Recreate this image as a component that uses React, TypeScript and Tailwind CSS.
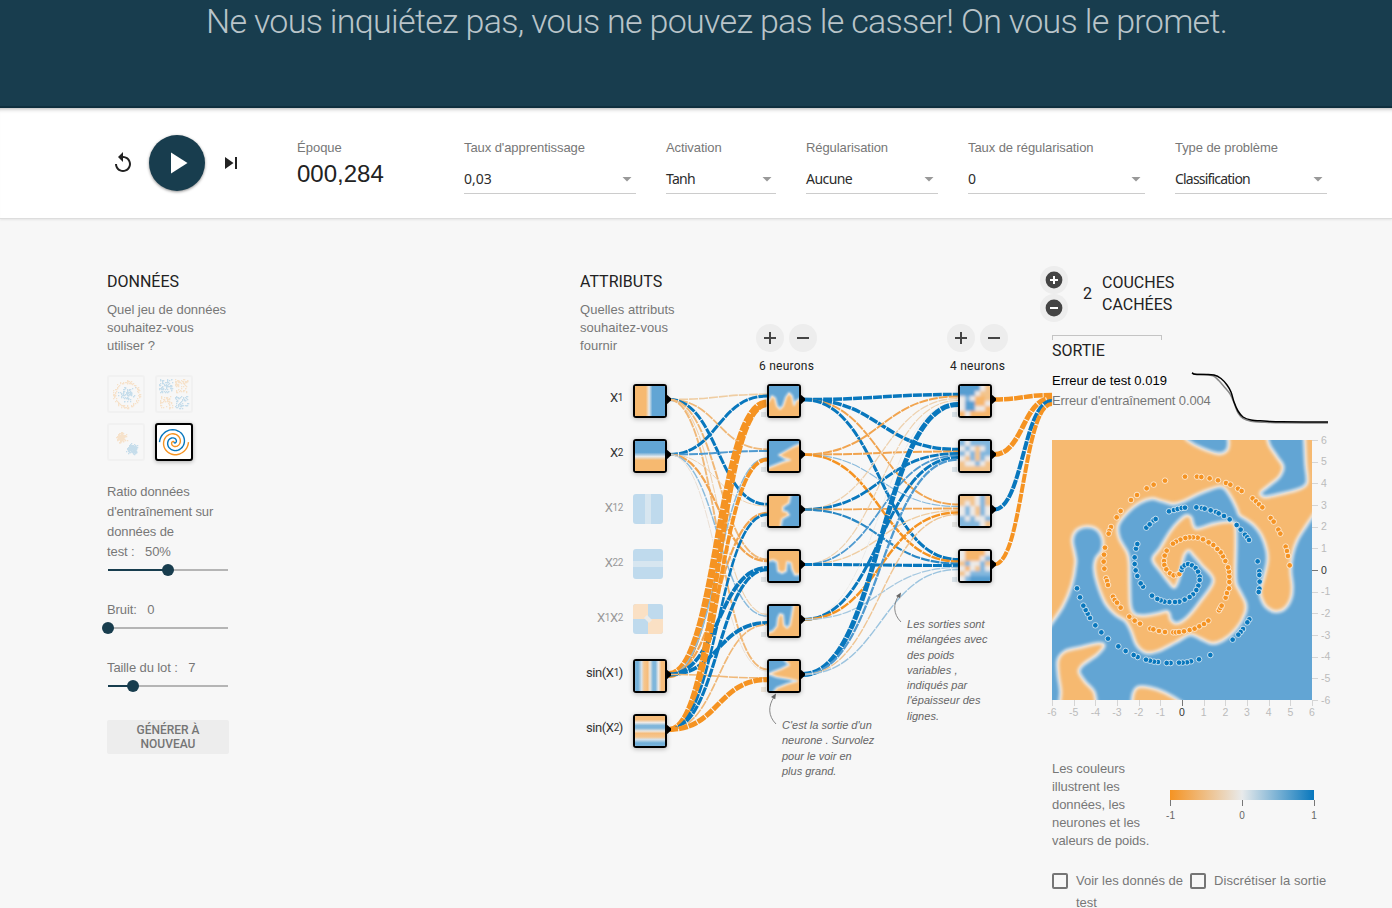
import React from "react";

type Pt = [number, number];

const BLUE = "#0877bd";
const ORANGE = "#f59322";
const MAP_ORANGE = "#f6b970";
const MAP_BLUE = "#62a5d4";

/** Catmull-Rom smoothing of a list of points into a cubic path. */
function smooth(p: Pt[]): string {
  const n = p.length;
  const at = (i: number): Pt => p[Math.max(0, Math.min(n - 1, i))];
  let d = `M${p[0][0]},${p[0][1]}`;
  for (let i = 0; i < n - 1; i++) {
    const a = at(i - 1), b = at(i), c = at(i + 1), e = at(i + 2);
    d += `C${b[0] + (c[0] - a[0]) / 6},${b[1] + (c[1] - a[1]) / 6} ${c[0] - (e[0] - b[0]) / 6},${c[1] - (e[1] - b[1]) / 6} ${c[0]},${c[1]}`;
  }
  return d;
}

/* ---------- toolbar ---------- */

function Select({ label, value, box, text }: { label: string; value: string; box: string; text: string }) {
  return (
    <div className={box}>
      <div className="h-[18px] whitespace-nowrap text-[13px] leading-[18px] tracking-[-0.08px] text-[#777]">{label}</div>
      <div className="mt-[8px] flex h-[29px] items-center justify-between border-b border-[#ccc] pr-1">
        <span className={"font-['Noto_Sans',sans-serif] text-[14px] leading-5 text-[#2c2c2c] " + text}>{value}</span>
        <svg width="10" height="5" viewBox="0 0 10 5"><path d="M0.5 0h9L5 4.5z" fill="#999" /></svg>
      </div>
    </div>
  );
}

function Toolbar() {
  return (
    <div className="relative flex h-[111px] border-b border-[#ddd] bg-white pl-[111px] shadow-[inset_0_5px_5px_-5px_rgba(0,0,0,0.45),0_1px_2px_rgba(0,0,0,0.08)]">
      <div className="flex h-[110px] w-[186px] items-center">
        <svg width="24" height="24" viewBox="0 0 24 24" fill="#222"><path d="M12 5V1L7 6l5 5V7c3.31 0 6 2.69 6 6s-2.69 6-6 6-6-2.69-6-6H4c0 4.42 3.58 8 8 8s8-3.58 8-8-3.58-8-8-8z" /></svg>
        <div className="ml-[14px] flex size-14 items-center justify-center rounded-full bg-[#183d4e] shadow-[0_1px_3px_rgba(0,0,0,0.45)]">
          <svg width="36" height="36" viewBox="0 0 24 24" fill="#fff"><path d="M8 5v14l11-7z" /></svg>
        </div>
        <svg className="ml-[14px]" width="24" height="24" viewBox="0 0 24 24" fill="#222"><path d="M6 18l8.5-6L6 6v12zM16 6v12h2V6h-2z" /></svg>
      </div>
      <div className="flex gap-[30px] pt-[31px]">
        <div className="w-[137px]">
          <div className="h-[18px] text-[13px] leading-[18px] text-[#777]">Époque</div>
          <div className="mt-[3px] text-[24px] leading-[28px] text-[#222]">000,284</div>
        </div>
        <Select label="Taux d'apprentissage" value="0,03" box="w-[172px]" text="" />
        <Select label="Activation" value="Tanh" box="w-[110px]" text="tracking-[-0.7px]" />
        <Select label="Régularisation" value="Aucune" box="w-[132px]" text="tracking-[-0.55px]" />
        <Select label="Taux de régularisation" value="0" box="w-[177px]" text="" />
        <Select label="Type de problème" value="Classification" box="w-[152px]" text="tracking-[-0.8px]" />
      </div>
    </div>
  );
}

/* ---------- data column ---------- */

function rng(seed: number) {
  let s = seed;
  return () => {
    s = (s * 16807) % 2147483647;
    return s / 2147483647;
  };
}

function datasetDots(kind: "circle" | "xor" | "gauss") {
  const r = rng(kind === "circle" ? 77 : kind === "xor" ? 901 : 3331);
  const out: { x: number; y: number; c: string }[] = [];
  const g = () => (r() + r() + r() - 1.5) * 1.4;
  if (kind === "circle") {
    for (let i = 0; i < 75; i++) out.push({ x: 17 + g() * 5, y: 17 + g() * 5, c: BLUE });
    for (let i = 0; i < 110; i++) {
      const a = r() * 6.283, d = 11 + r() * 3;
      out.push({ x: 17.5 + d * Math.cos(a), y: 17 + d * Math.sin(a), c: ORANGE });
    }
  } else if (kind === "xor") {
    for (let i = 0; i < 250; i++) {
      const u = r() < 0.5, v = r() < 0.5;
      out.push({ x: (u ? 18 : 2) + r() * 13, y: (v ? 18 : 2) + r() * 13, c: u === v ? BLUE : ORANGE });
    }
  } else {
    for (let i = 0; i < 150; i++) out.push({ x: 12 + g() * 3.2, y: 12 + g() * 3, c: ORANGE });
    for (let i = 0; i < 150; i++) out.push({ x: 23 + g() * 3.4, y: 23.5 + g() * 3, c: BLUE });
  }
  return out;
}

function DatasetThumb({ kind }: { kind: "circle" | "xor" | "gauss" }) {
  return (
    <div className="size-[38px] rounded-[3px] border-2 border-[#f1f1f1]">
      <svg className="opacity-20" width="34" height="34">
        {datasetDots(kind).map((d, i) => (
          <rect key={i} x={Math.round(d.x)} y={Math.round(d.y)} width="1.3" height="1.3" fill={d.c} />
        ))}
      </svg>
    </div>
  );
}

function spiral(flip: boolean) {
  const pts: Pt[] = [];
  for (let i = 0; i <= 60; i++) {
    const t = (i / 60) * 3.5 * Math.PI;
    const rad = (i / 60) * 14.5;
    const s = flip ? -1 : 1;
    pts.push([17 + s * rad * Math.sin(t), 17.2 + s * rad * Math.cos(t)]);
  }
  return smooth(pts);
}

function Slider({ label, value, fill }: { label: string; value: string; fill: number }) {
  return (
    <div>
      <div className="whitespace-pre text-[13px] leading-5 tracking-[-0.1px] text-[#777]">{label + "   " + value}</div>
      <svg className="-ml-[6px] mt-[2px] block overflow-visible" width="134" height="12">
        <rect x="7" y="5" width="120" height="2" fill="#b5b5b5" />
        <rect x="7" y="5" width={fill} height="2" fill="#183d4e" />
        <circle cx={7 + fill} cy="6" r="6" fill="#183d4e" />
      </svg>
    </div>
  );
}

function DataColumn() {
  return (
    <div className="w-[122px] shrink-0 pt-[53px]">
      <h4 className="font-[Roboto,sans-serif] text-[16px] leading-5 text-[#222]">DONNÉES</h4>
      <p className="mt-[9px] whitespace-pre text-[13px] leading-[18px] tracking-[-0.05px] text-[#777]">{"Quel jeu de données\nsouhaitez-vous\nutiliser ?"}</p>
      <div className="mt-5 grid w-[86px] grid-cols-2 gap-[10px]">
        <DatasetThumb kind="circle" />
        <DatasetThumb kind="xor" />
        <DatasetThumb kind="gauss" />
        <div className="size-[38px] rounded-[3px] border-2 border-black bg-white shadow-[0_1px_4px_rgba(0,0,0,0.3)]">
          <svg width="34" height="34" fill="none" strokeWidth="1.4">
            <path d={spiral(true)} stroke={ORANGE} />
            <path d={spiral(false)} stroke={BLUE} />
          </svg>
        </div>
      </div>
      <div className="mt-[21px]">
        <Slider label={"Ratio données\nd'entraînement sur\ndonnées de\ntest :"} value="50%" fill={60} />
      </div>
      <div className="mt-[24px]"><Slider label="Bruit:" value="0" fill={0} /></div>
      <div className="mt-[24px]"><Slider label="Taille du lot :" value="7" fill={25} /></div>
      <div className="mt-[28px] flex h-[34px] items-center justify-center rounded-[2px] bg-[#ededed] text-center font-[Roboto,sans-serif] text-[12px] font-medium leading-[14px] text-[#757575]">
        GÉNÉRER À<br />NOUVEAU
      </div>
    </div>
  );
}

/* ---------- network ---------- */

const OX = 580;
const OY = 219;

type Link = [number, number, number, string];

const LO = "#f0b878";
const VLO = "#eed2b0";
const MO = "#f1a44f";
const LB = "#8bbbdc";
const MB = "#4f9ad0";
const VG = "#e4e2df";

const layer1: Link[] = [
  [0, 0, 1.6, "#efcda2"], [0, 1, 1.8, LO], [0, 2, 3, BLUE], [0, 3, 1.9, LO], [0, 4, 1.1, VLO], [0, 5, 1.9, LO],
  [1, 0, 3, BLUE], [1, 1, 2, MB], [1, 2, 1, VLO], [1, 3, 2.2, MO], [1, 4, 1.5, LB], [1, 5, 0.9, "#e9ddd0"],
  [5, 0, 7, ORANGE], [5, 1, 1.5, LB], [5, 2, 2.2, MO], [5, 3, 3.8, BLUE], [5, 4, 3.8, BLUE], [5, 5, 1.6, LO],
  [6, 0, 5, ORANGE], [6, 1, 3.8, ORANGE], [6, 2, 2.6, BLUE], [6, 3, 3.2, BLUE], [6, 4, 1.7, LO], [6, 5, 5, ORANGE],
];
const layer2: Link[] = [
  [0, 0, 3.5, BLUE], [0, 1, 3.5, BLUE], [0, 2, 1.9, MO], [0, 3, 3, BLUE],
  [1, 0, 2, MO], [1, 1, 2, MO], [1, 2, 1.2, LB], [1, 3, 2.5, ORANGE],
  [2, 0, 1.3, VLO], [2, 1, 2.8, BLUE], [2, 2, 1.8, MO], [2, 3, 2.2, "#2887c4"],
  [3, 0, 1.2, VLO], [3, 1, 1.8, MB], [3, 2, 1.4, "#efcda2"], [3, 3, 3.1, BLUE],
  [4, 0, 0.6, VG], [4, 1, 3, BLUE], [4, 2, 2.5, ORANGE], [4, 3, 1.3, "#a5c8e0"],
  [5, 0, 5, BLUE], [5, 1, 2.3, MB], [5, 2, 1.4, "#efc594"], [5, 3, 1.4, "#9cc4df"],
];
const layer3: Link[] = [[0, 0, 4.5, ORANGE], [1, 0, 5, ORANGE], [2, 0, 4, BLUE], [3, 0, 4, ORANGE]];

function diag(x0: number, y0: number, x1: number, y1: number) {
  const m = (x0 + x1) / 2;
  return `M${x0},${y0}C${m},${y0} ${m},${y1} ${x1},${y1}`;
}

function Links() {
  const draw = (ls: Link[], x0: number, x1: number, n: number, key: string) =>
    ls.map(([i, j, w, c]) => (
      <path
        key={key + i + "-" + j}
        d={diag(x0, 399.5 + i * 55, x1, 399.5 + j * 55 + ((i - (n - 1) / 2) / n) * 12)}
        stroke={c}
        strokeWidth={w}
        strokeDasharray="9 1"
      />
    ));
  return (
    <svg className="absolute left-0 top-0" width="472" height="600" viewBox={`${OX} ${OY} 472 600`} fill="none">
      {draw(layer1, 669, 767, 7, "a")}
      {draw(layer2, 803, 958, 6, "b")}
      {draw(layer3, 994, 1052, 4, "c")}
      <g stroke="#888" strokeWidth="1">
        <path d="M776 724C768 716 768 706 774 697" />
        <path d="M901 622C893 614 893 604 899 595" />
      </g>
      <g fill="#666">
        <path d="M776 693.5l-5 3.5 4.2 2.2z" />
        <path d="M901 592.5l-5 3.5 4.2 2.2z" />
      </g>
    </svg>
  );
}

type Shape = { base: string; top: string; d: string };

const hidden1: Shape[] = [
  { base: MAP_ORANGE, top: MAP_BLUE, d: "M-4,-4V16L0,15L3,10L6,12L8,20L11,23L14,20L17,11L20,7L23,10L25,19L27,15L34,11V-4Z" },
  { base: MAP_ORANGE, top: MAP_BLUE, d: "M-4,-4V28L4,25L14,21L21,19L15,17L10,14L17,10L24,6L34,2V-4Z" },
  { base: MAP_BLUE, top: MAP_ORANGE, d: "M-4,-4H22L20,7L14,11L14,15L18,16L20,19L13,23L11,34H-4Z" },
  { base: MAP_BLUE, top: MAP_ORANGE, d: "M-4,-4H34V23L26,24L23,18L22,12L18,11L17,20L13,22L9,20L8,11L4,9L-4,11Z" },
  { base: MAP_ORANGE, top: MAP_BLUE, d: "M-4,-4H25L23,8L21,19L18,22L15,19L14,9L11,8L9,12L8,20L4,25L-4,28Z" },
  { base: MAP_ORANGE, top: MAP_BLUE, d: "M-4,-4H13L20,4L12,8L4,11L0,13L8,16L20,18L28,20L18,23L8,27L2,34H-4Z" },
];

const hidden2: string[][] = [
  ["BBBBwo", "BBBwoo", "wbwOOo", "wBBOOw", "wBBwwO", "OwOOOO"],
  ["bwbbbb", "wbwowb", "bwbobb", "wobobw", "owwbwo", "oooooo"],
  ["ooowbo", "owowbo", "wbwobw", "wbwobw", "bwbwwb", "bbbbwo"],
  ["wOOOOw", "wOOOwb", "obwwbo", "wOwobw", "owbbbb", "wbBBBB"],
];
const cell: Record<string, string> = { B: "#569ed1", b: "#82b7de", w: "#eceae8", o: "#f3c48c", O: "#f6b66c" };

function NodeBox({ x, y, bias, children }: { x: number; y: number; bias?: string; children: React.ReactNode }) {
  return (
    <div className="absolute size-[34px]" style={{ left: x - OX, top: y - OY }}>
      {bias && <div className="absolute -left-[6px] top-[28px] size-[5px]" style={{ background: bias }} />}
      <div className="relative size-[34px] overflow-hidden rounded-[3px] border-2 border-black shadow-[0_1px_5px_rgba(0,0,0,0.28)]">
        <svg className="block" width="30" height="30">{children}</svg>
      </div>
      <svg className="absolute left-[33px] top-[10px]" width="6" height="11"><path d="M0 0L5 4.2V6.4L0 11z" /></svg>
    </div>
  );
}

function Stops({ c }: { c: [number, string][] }) {
  return <>{c.map(([o, s], i) => <stop key={i} offset={o} stopColor={s} />)}</>;
}

const sinStops: [number, string][] = [
  [0, "#7ab3da"], [0.1, "#6faed8"], [0.22, "#d7e2ea"], [0.3, "#f6c68e"], [0.42, "#f6bd7c"], [0.5, "#ece6de"],
  [0.6, "#7fb6db"], [0.68, "#7fb6db"], [0.78, "#eceae8"], [0.88, "#f6bd7c"], [1, "#f6bd7c"],
];

function Label({ y, faded, children }: { y: number; faded?: boolean; children: React.ReactNode }) {
  return (
    <div
      className={"absolute left-0 flex h-5 w-[43px] items-center justify-end whitespace-nowrap font-[Roboto,sans-serif] text-[13px] tracking-[-0.4px] " + (faded ? "text-[#999]" : "text-[#333]")}
      style={{ top: y - 9 - OY }}
    >
      {children}
    </div>
  );
}

const S = ({ children }: { children: React.ReactNode }) => <span className="pb-px text-[10px]">{children}</span>;

function RoundButton({ minus }: { minus?: boolean }) {
  return (
    <div className="flex size-7 items-center justify-center rounded-full bg-[#ededed]">
      <svg width="12" height="12" fill="#444">
        <rect x="0" y="5" width="12" height="2" />
        {!minus && <rect x="5" y="0" width="2" height="12" />}
      </svg>
    </div>
  );
}

function LayerHead({ x, label }: { x: number; label: string }) {
  return (
    <div className="absolute top-[105px] w-[61px]" style={{ left: x - OX }}>
      <div className="flex gap-[5px]"><RoundButton /><RoundButton minus /></div>
      <div className="mt-[6px] whitespace-nowrap pl-[3px] font-[Roboto,sans-serif] text-[12px] leading-4 tracking-[0.25px] text-[#222]">{label}</div>
    </div>
  );
}

function Network() {
  return (
    <div className="relative ml-[351px] h-[689px] w-[472px] shrink-0 pt-[53px]">
      <svg width="0" height="0" className="absolute">
        <defs>
          <linearGradient id="gx"><Stops c={[[0, MAP_ORANGE], [0.36, MAP_ORANGE], [0.47, "#e8eaeb"], [0.58, MAP_BLUE], [1, MAP_BLUE]]} /></linearGradient>
          <linearGradient id="gy" x2="0" y2="1"><Stops c={[[0, MAP_BLUE], [0.38, MAP_BLUE], [0.52, "#e8eaeb"], [0.64, MAP_ORANGE], [1, MAP_ORANGE]]} /></linearGradient>
          <linearGradient id="sx"><Stops c={sinStops} /></linearGradient>
          <linearGradient id="sy" x1="0" y1="1" x2="0" y2="0"><Stops c={sinStops} /></linearGradient>
          <filter id="b1"><feGaussianBlur stdDeviation="0.8" /></filter>
          <filter id="b2" filterUnits="userSpaceOnUse" x="-6" y="-6" width="42" height="42"><feGaussianBlur stdDeviation="1.6" /></filter>
        </defs>
      </svg>
      <h4 className="font-[Roboto,sans-serif] text-[16px] leading-5 text-[#222]">ATTRIBUTS</h4>
      <p className="mt-[9px] whitespace-pre text-[13px] leading-[18px] tracking-[0.04px] text-[#777]">{"Quelles attributs\nsouhaitez-vous\nfournir"}</p>

      <Links />
      <LayerHead x={756} label="6 neurons" />
      <LayerHead x={947} label="4 neurons" />

      <Label y={397}>X<S>1</S></Label>
      <Label y={452}>X<S>2</S></Label>
      <Label y={507} faded>X<S>12</S></Label>
      <Label y={562} faded>X<S>22</S></Label>
      <Label y={617} faded>X<S>1</S>X<S>2</S></Label>
      <Label y={672}>sin(X<S>1</S>)</Label>
      <Label y={727}>sin(X<S>2</S>)</Label>

      <NodeBox x={633} y={384}><rect width="30" height="30" fill="url(#gx)" /></NodeBox>
      <NodeBox x={633} y={439}><rect width="30" height="30" fill="url(#gy)" /></NodeBox>
      <svg className="absolute left-[53px] top-[275px] rounded-[3px]" width="30" height="30">
        <rect width="30" height="30" fill="#bfdaed" /><rect x="12" width="6" height="30" fill="#d7e6f0" />
      </svg>
      <svg className="absolute left-[53px] top-[330px] rounded-[3px]" width="30" height="30">
        <rect width="30" height="30" fill="#bfdaed" /><rect y="12" width="30" height="6" fill="#d7e6f0" />
      </svg>
      <svg className="absolute left-[53px] top-[385px] rounded-[3px]" width="30" height="30">
        <rect width="30" height="30" fill="#bfdaed" />
        <path d="M0 0h15v15H0zM15 15h15v15H15z" fill="#fae0c4" />
        <path d="M11 14l3-3 5 5-3 3z" fill="#ecebe9" />
      </svg>
      <NodeBox x={633} y={659}><rect width="30" height="30" fill="url(#sx)" /></NodeBox>
      <NodeBox x={633} y={714}><rect width="30" height="30" fill="url(#sy)" /></NodeBox>

      {hidden1.map((s, i) => (
        <NodeBox key={i} x={767} y={384 + i * 55} bias={i === 5 ? "#ebe3d8" : "#dfe3e5"}>
          <rect width="30" height="30" fill={s.base} />
          <path d={s.d} fill={s.top} />
          <path d={s.d} fill="none" stroke="#edebe9" strokeWidth="2" strokeLinejoin="round" filter="url(#b1)" />
        </NodeBox>
      ))}
      {hidden2.map((rows, i) => (
        <NodeBox key={i} x={958} y={384 + i * 55} bias={i === 2 ? "#e3e3e1" : "#d8e1e7"}>
          <rect width="30" height="30" fill="#eceae8" />
          <g filter="url(#b2)">
            {rows.map((r, y) => r.split("").map((c, x) => (
              <rect key={x + "," + y} x={x === 0 ? -4 : x * 5} y={y === 0 ? -4 : y * 5} width={x === 0 || x === 5 ? 9 : 5} height={y === 0 || y === 5 ? 9 : 5} fill={cell[c]} />
            )))}
          </g>
        </NodeBox>
      ))}

      <p className="absolute left-[327px] top-[398px] whitespace-pre text-[11px] italic leading-[15.25px] tracking-[0.03px] text-[#666]">{"Les sorties sont\nmélangées avec\ndes poids\nvariables ,\nindiqués par\nl'épaisseur des\nlignes."}</p>
      <p className="absolute left-[202px] top-[499px] whitespace-pre text-[11px] italic leading-[15.25px] text-[#666]">{"C'est la sortie d'un\nneurone . Survolez\npour le voir en\nplus grand."}</p>
    </div>
  );
}

/* ---------- output ---------- */

const mainBlue: Pt[] = [
  [830, 240], [800, 285], [772, 330], [757, 375], [752, 420], [757, 470], [753, 505], [735, 535], [708, 545], [680, 532], [664, 505], [661, 480],
  [672, 440], [682, 395], [680, 360], [664, 315], [642, 286], [618, 268], [598, 255], [590, 235], [575, 205], [556, 177], [540, 170],
  [510, 178], [475, 192], [430, 214], [400, 222], [365, 213], [335, 206], [300, 218], [265, 245], [235, 285], [238, 325], [262, 368], [268, 400],
  [269, 470], [272, 530], [285, 553], [315, 557], [355, 550], [380, 544], [388, 552], [393, 570], [410, 580], [440, 563], [480, 515], [520, 452],
  [485, 405], [462, 378], [446, 362], [432, 378], [425, 410], [415, 450], [403, 472], [385, 455], [362, 425], [338, 388], [360, 355], [390, 305], [415, 275],
  [438, 257], [453, 262], [460, 285], [472, 296], [520, 282], [570, 275], [586, 288], [588, 340], [586, 420], [588, 460], [600, 485], [617, 520], [615, 550],
  [590, 595], [550, 630], [515, 640], [480, 625], [450, 614], [410, 635], [355, 663], [318, 668], [290, 645], [272, 600], [255, 572], [225, 553], [195, 518],
  [172, 460], [163, 415], [168, 385], [186, 360], [187, 325], [170, 298], [140, 290], [110, 301], [97, 330], [104, 370], [107, 400], [95, 465], [68, 530], [20, 600],
];
const topSmall: Pt[] = [[430, 15], [445, 33], [485, 55], [535, 71], [560, 62], [566, 40], [562, 10]];
const topRight: Pt[] = [[680, 10], [688, 45], [712, 82], [729, 110], [718, 140], [685, 168], [662, 188], [675, 201], [725, 191], [775, 178], [801, 158], [797, 100], [793, 10]];
const botLeft: Pt[] = [[57, 830], [62, 785], [55, 735], [54, 690], [75, 664], [120, 652], [175, 640], [192, 648], [170, 675], [130, 703], [117, 725], [135, 755], [162, 785], [170, 830]];
const botMid: Pt[] = [[275, 830], [280, 790], [295, 771], [330, 773], [375, 788], [425, 818], [430, 830]];

const orangeDots: Pt[] = [
  [435,140],[471,140],[484,141],[509,145],[534,151],[558,159],[571,164],[594,176],[605,183],[375,152],[341,164],[320,175],[291,195],[273,210],[242,243],[230,262],[213,291],[208,303],[206,311],[195,353],[192,374],[191,395],[193,416],[198,445],[201,453],[204,465],[219,500],[224,510],[231,518],[242,533],[268,560],[284,572],[300,581],[331,596],[340,598],[357,603],[375,606],[400,607],[408,607],[417,606],[432,604],[449,600],[464,596],[478,589],[492,582],[505,572],[537,541],[541,534],[545,527],[557,503],[561,489],[567,475],[568,456],[568,440],[567,425],[564,412],[556,393],[549,379],[542,367],[532,357],[520,345],[506,337],[489,328],[473,323],[459,322],[448,322],[436,324],[421,329],[408,335],[399,341],[380,362],[374,377],[372,393],[373,405],[379,418],[390,430],[401,436],[413,434],[418,432],[638,205],[648,214],[657,223],[667,232],[692,264],[701,275],[715,299],[721,311],[737,350],[741,363],[744,378],[749,406],
];
const blueDots: Pt[] = [
  [425,420],[427,412],[434,406],[444,402],[456,406],[467,414],[474,425],[479,440],[479,450],[475,467],[469,480],[459,493],[449,501],[434,509],[418,515],[405,516],[388,516],[373,515],[362,511],[352,507],[336,497],[309,470],[302,460],[292,438],[287,421],[284,402],[284,382],[288,356],[292,342],[319,293],[329,283],[341,271],[347,267],[387,244],[402,240],[413,237],[425,234],[435,233],[469,232],[486,234],[494,236],[512,241],[528,246],[536,250],[552,258],[569,268],[590,285],[602,299],[615,314],[622,322],[627,330],[653,394],[658,424],[658,435],[659,455],[658,476],[656,486],[628,568],[622,577],[609,597],[602,606],[595,614],[578,629],[511,675],[477,688],[453,694],[441,697],[428,698],[417,698],[392,699],[380,699],[354,696],[342,695],[330,692],[318,689],[293,681],[281,675],[257,663],[235,649],[204,626],[184,607],[166,586],[150,564],[143,551],[137,540],[130,527],[120,502],[111,475],
];

function Heatmap() {
  const regions: { p: Pt[]; c: string; tail: string }[] = [
    { p: mainBlue, c: MAP_BLUE, tail: "V850H850V240Z" },
    { p: topSmall, c: MAP_BLUE, tail: "Z" },
    { p: topRight, c: MAP_BLUE, tail: "Z" },
    { p: botLeft, c: MAP_ORANGE, tail: "Z" },
    { p: botMid, c: MAP_ORANGE, tail: "Z" },
  ];
  const ticks = Array.from({ length: 13 }, (_, i) => i - 6);
  return (
    <svg className="block overflow-visible" width="280" height="284">
      <defs><filter id="b3" filterUnits="userSpaceOnUse" x="0" y="0" width="860" height="860"><feGaussianBlur stdDeviation="4" /></filter></defs>
      <svg x="0" y="0" width="260" height="260" viewBox="36 30 780 780">
        <rect x="36" y="30" width="780" height="780" fill={MAP_ORANGE} />
        {regions.map((r, i) => <path key={i} d={smooth(r.p) + r.tail} fill={r.c} />)}
        <g fill="none" stroke="#ebeae9" strokeWidth="10" filter="url(#b3)">
          {regions.map((r, i) => <path key={i} d={smooth(r.p)} />)}
        </g>
        <g stroke="#fff" strokeOpacity="0.7" strokeWidth="3">
          {orangeDots.map(([x, y], i) => <circle key={i} cx={x} cy={y} r="8.4" fill={ORANGE} />)}
          {blueDots.map(([x, y], i) => <circle key={i} cx={x} cy={y} r="8.4" fill={BLUE} />)}
        </g>
      </svg>
      <g fontSize="10.5" fontFamily="Liberation Sans, sans-serif">
        {ticks.map((t) => {
          const p = ((t + 6) * 260) / 12;
          const q = 260 - p;
          const c = t === 0 ? "#333" : "#bbb";
          return (
            <g key={t} fill={c} stroke="none">
              <rect x={Math.round(p)} y="260" width="1" height="6" fill={t === 0 ? "#777" : "#d5d5d5"} />
              <text x={p} y="276" textAnchor="middle">{t}</text>
              <rect x="260" y={Math.round(q)} width="6" height="1" fill={t === 0 ? "#777" : "#d5d5d5"} />
              <text x="269" y={q + 3.5}>{t}</text>
            </g>
          );
        })}
      </g>
    </svg>
  );
}

function CircleIcon({ minus }: { minus?: boolean }) {
  return (
    <div className="flex size-7 items-center justify-center rounded-full bg-[#ededed]">
      <svg width="18" height="18">
        <circle cx="9" cy="9" r="8.4" fill="#444" />
        <rect x="5" y="8" width="8" height="2" fill="#fff" />
        {!minus && <rect x="8" y="5" width="2" height="8" fill="#fff" />}
      </svg>
    </div>
  );
}

function Check({ children, box }: { children: React.ReactNode; box: string }) {
  return (
    <div className={"flex " + box}>
      <div className="mt-[3px] size-4 shrink-0 rounded-[2px] border-2 border-[#757575]" />
      <div className="ml-2 whitespace-pre text-[13px] leading-[22px] text-[#777]">{children}</div>
    </div>
  );
}

function Output() {
  const testLine: Pt[] = [[0, 0.8], [3, 2.3], [12, 2.6], [22, 3], [29, 6.5], [35, 13], [39, 20], [42, 30], [46, 39], [51, 45], [59, 48], [72, 49], [90, 49.8], [136, 50]];
  const trainLine: Pt[] = [[0, 1], [3, 2.3], [12, 2.8], [21, 4], [27, 9], [33, 16], [38, 22], [42, 31], [46, 41], [51, 46.5], [59, 49.5], [72, 50.5], [90, 51], [136, 51.2]];
  return (
    <div className="w-[280px] shrink-0 pt-[47px]">
      <div className="-ml-3 flex h-14 items-center font-[Roboto,sans-serif] text-[16px] text-[#222]">
        <div><CircleIcon /><CircleIcon minus /></div>
        <span className="ml-[15px] w-[19px]">2</span>
        <span className="whitespace-pre leading-[22px]">{"COUCHES\nCACHÉES"}</span>
      </div>
      <div className="mt-[13px] h-[5px] w-[110px] border-x border-t border-[#c4c4c4]" />
      <h4 className="mt-px font-[Roboto,sans-serif] text-[16px] leading-5 text-[#222]">SORTIE</h4>
      <div className="relative mt-[10px] h-[69px] whitespace-nowrap text-[13px] leading-5">
        <div className="text-black">Erreur de test 0.019</div>
        <div className="tracking-[-0.13px] text-[#777]">Erreur d'entraînement 0.004</div>
        <svg className="absolute left-[140px] top-0 overflow-visible" width="136" height="55" fill="none" strokeWidth="1.5">
          <path d={smooth(trainLine)} stroke="#888" transform="translate(0,0.8)" />
          <path d={smooth(testLine)} stroke="#000" transform="translate(0,1)" />
        </svg>
      </div>
      <Heatmap />
      <div className="mt-[36px] flex">
        <p className="w-[118px] whitespace-pre text-[13px] leading-[18px] tracking-[-0.06px] text-[#777]">{"Les couleurs\nillustrent les\ndonnées, les\nneurones et les\nvaleurs de poids."}</p>
        <svg className="mt-[30px] overflow-visible" width="145" height="34">
          <defs><linearGradient id="scale"><Stops c={[[0, ORANGE], [0.5, "#e8eaeb"], [1, BLUE]]} /></linearGradient></defs>
          <rect width="144" height="10" fill="url(#scale)" />
          <g fill="#777">
            <rect x="0" y="10" width="1" height="6" /><rect x="72" y="10" width="1" height="6" /><rect x="144" y="10" width="1" height="6" />
          </g>
          <g fontSize="10" fill="#666" textAnchor="middle" fontFamily="Liberation Sans, sans-serif">
            <text x="0.5" y="29">-1</text><text x="72" y="29">0</text><text x="144" y="29">1</text>
          </g>
        </svg>
      </div>
      <div className="mt-[20px] flex">
        <Check box="w-[138px]">{"Voir les donnés de\ntest"}</Check>
        <Check box="tracking-[0.08px]">Discrétiser la sortie</Check>
      </div>
    </div>
  );
}

export default function App() {
  return (
    <div className="h-[908px] w-[1392px] overflow-hidden bg-[#f7f7f7] font-['Liberation_Sans',Arial,sans-serif]">
      <header className="h-[108px] border-b-2 border-[#0f2f3e] bg-[#183d4e] pl-[206px]">
        <h1 className="whitespace-nowrap pt-[1px] font-[Roboto,sans-serif] text-[34px] font-light leading-10 tracking-[-0.69px] text-[#b9c4c9]">
          Ne vous inquiétez pas, vous ne pouvez pas le casser! On vous le promet.
        </h1>
      </header>
      <Toolbar />
      <main className="flex h-[689px] pl-[107px]">
        <DataColumn />
        <Network />
        <Output />
      </main>
    </div>
  );
}
